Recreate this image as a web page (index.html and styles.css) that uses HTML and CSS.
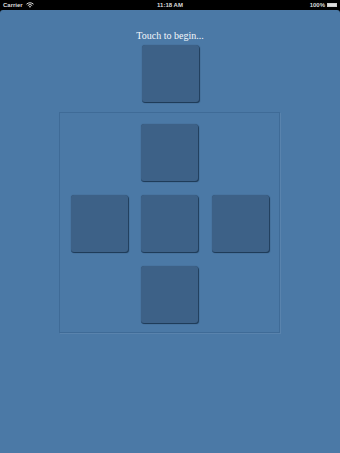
FILE: index.html
```html
<!DOCTYPE html>
<html lang="en">
<head>
  <meta charset="UTF-8">
  <title>Touch to begin</title>
  <link rel="stylesheet" href="styles.css">
</head>
<body>
  <div class="status">
    <div class="left">Carrier
      <svg class="wifi" width="8" height="6" viewBox="0 0 8 6">
        <path d="M0.5 2.2 A5 5 0 0 1 7.5 2.2" stroke="#ddd" stroke-width="1" fill="none"/>
        <path d="M1.8 3.5 A3.2 3.2 0 0 1 6.2 3.5" stroke="#ddd" stroke-width="1" fill="none"/>
        <path d="M4 5.8 L2.9 4.6 A1.6 1.6 0 0 1 5.1 4.6 Z" fill="#ddd"/>
      </svg>
    </div>
    <div class="time">11:18 AM</div>
    <div class="right">100%
      <span class="battery"><span class="fill"></span></span>
    </div>
  </div>

  <div class="app">
    <p class="hint">Touch to begin...</p>
    <div class="tile start"></div>

    <div class="board">
      <div class="tile up"></div>
      <div class="tile left-t"></div>
      <div class="tile mid"></div>
      <div class="tile right-t"></div>
      <div class="tile down"></div>
    </div>
  </div>
</body>
</html>
```

FILE: styles.css
```css
html, body {
  margin: 0;
  height: 100%;
}
body {
  background: #000;
  font-family: "Liberation Sans", Arial, sans-serif;
  display: flex;
  flex-direction: column;
}
.status {
  height: 10px;
  background: #000;
  color: #ddd;
  font-size: 6px;
  line-height: 10px;
  display: flex;
  justify-content: space-between;
  align-items: center;
  padding: 0 3px;
  font-weight: bold;
}
.status .left, .status .right {
  width: 60px;
  display: flex;
  align-items: center;
  gap: 3px;
}
.status .right {
  justify-content: flex-end;
  gap: 2px;
}
.battery {
  width: 10px;
  height: 4px;
  border: 1px solid #ccc;
  box-sizing: border-box;
  display: inline-block;
}
.battery .fill {
  display: block;
  height: 100%;
  background: #ddd;
}
.app {
  flex: 1;
  background: #4b79a6;
  border-radius: 3px 3px 0 0;
  display: flex;
  flex-direction: column;
  align-items: center;
}
.hint {
  margin: 20px 0 0;
  color: #f4f7fb;
  font-family: "Liberation Serif", "Times New Roman", serif;
  font-size: 10px;
  line-height: 12px;
  height: 13px;
}
.tile {
  width: 57px;
  height: 57px;
  background: #3d6187;
  border-radius: 3px;
  box-shadow: 1px 1px 1px #1f3b58, 0 1px 0 #2a4a6c, 0 0 1px rgba(0, 0, 0, 0.35);
}
.start {
  margin-top: 2px;
  margin-left: 1px;
}
.board {
  margin-top: 10px;
  margin-right: 2px;
  width: 221px;
  height: 221px;
  box-sizing: border-box;
  border: 1px solid #3f6b97;
  box-shadow: 1px 1px 0 rgba(255, 255, 255, 0.08);
  padding: 11px;
  display: grid;
  grid-template-columns: 57px 57px 57px;
  grid-template-rows: 57px 57px 57px;
  column-gap: 13.5px;
  row-gap: 14px;
}
.up { grid-column: 2; grid-row: 1; }
.left-t { grid-column: 1; grid-row: 2; }
.mid { grid-column: 2; grid-row: 2; }
.right-t { grid-column: 3; grid-row: 2; }
.down { grid-column: 2; grid-row: 3; }
```
